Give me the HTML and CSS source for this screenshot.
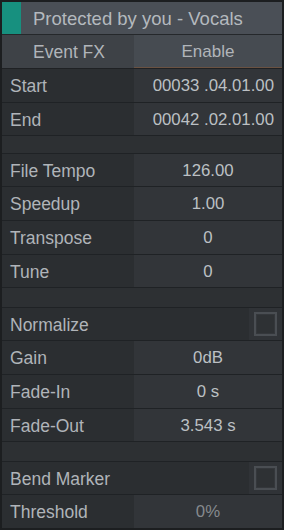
FILE: index.html
```html
<!DOCTYPE html>
<html>
<head>
<meta charset="utf-8">
<link rel="stylesheet" href="styles.css">
</head>
<body>
<div class="panel">
  <div class="header"><div class="tag"></div><div class="title">Protected by you - Vocals</div></div>
  <div class="fxrow"><div class="fxlabel">Event FX</div><div class="fxvalue">Enable</div></div>
  <div class="row"><div class="label">Start</div><div class="value right">00033 .04.01.00</div></div>
  <div class="row"><div class="label">End</div><div class="value right">00042 .02.01.00</div></div>
  <div class="gap first"></div>
  <div class="row"><div class="label">File Tempo</div><div class="value">126.00</div></div>
  <div class="row"><div class="label">Speedup</div><div class="value">1.00</div></div>
  <div class="row"><div class="label">Transpose</div><div class="value">0</div></div>
  <div class="row"><div class="label">Tune</div><div class="value">0</div></div>
  <div class="gap"></div>
  <div class="row"><div class="label wide">Normalize</div><div class="check"><div class="box"></div></div></div>
  <div class="row"><div class="label">Gain</div><div class="value">0dB</div></div>
  <div class="row"><div class="label">Fade-In</div><div class="value">0 s</div></div>
  <div class="row"><div class="label">Fade-Out</div><div class="value">3.543 s</div></div>
  <div class="gap"></div>
  <div class="row"><div class="label wide">Bend Marker</div><div class="check"><div class="box"></div></div></div>
  <div class="row last"><div class="label">Threshold</div><div class="value dim">0%</div></div>
</div>
</body>
</html>
```
FILE: styles.css
```css
html, body {
  margin: 0;
  padding: 0;
  background: #1c1e20;
}
body {
  font-family: "Liberation Sans", Arial, sans-serif;
  width: 284px;
  height: 530px;
  overflow: hidden;
}
.panel {
  margin: 2px 2px 0 2px;
  display: flex;
  flex-direction: column;
}
.header {
  height: 32px;
  display: flex;
  background: #4a4f56;
  border-bottom: 1px solid #25282b;
}
.tag {
  width: 19px;
  background: #17907f;
}
.title {
  padding-left: 12px;
  font-size: 18.5px;
  line-height: 33px;
  color: #b4b9be;
}
.fxrow {
  height: 33px;
  display: flex;
  border-bottom: 1px solid #1f2124;
}
.fxlabel {
  width: 101px;
  padding-left: 31px;
  background: #3e4247;
  color: #b1b5ba;
  font-size: 17.5px;
  line-height: 35px;
}
.fxvalue {
  flex: 1;
  background: #464b51;
  border-bottom: 1px solid #6a5242;
  color: #b1b5ba;
  font-size: 17px;
  line-height: 34px;
  text-align: center;
}
.row {
  height: 32.6px;
  display: flex;
  border-bottom: 1px solid #1f2225;
  line-height: 34px;
}
.label {
  width: 124px;
  padding-left: 8px;
  background: #2b2e31;
  color: #b0b4b9;
  font-size: 17.5px;
}
.label.wide {
  width: 239px;
}
.value {
  flex: 1;
  background: #323539;
  color: #bcc0c4;
  font-size: 16.8px;
  text-align: center;
}
.value.right {
  text-align: right;
  padding-right: 8px;
}
.value.dim {
  color: #868a8e;
}
.check {
  flex: 1;
  background: #303337;
  display: flex;
  align-items: center;
  justify-content: center;
}
.box {
  width: 19px;
  height: 20px;
  border: 2px solid #4a4e53;
  box-shadow: inset 0 0 0 1px #34373b;
  background: #2e3134;
}
.gap {
  height: 18.6px;
  background: #2d3033;
  border-bottom: 1px solid #1f2225;
}
.first {
  height: 16.6px;
}
.last {
  border-bottom: 3px solid #1c1e20;
}
```
